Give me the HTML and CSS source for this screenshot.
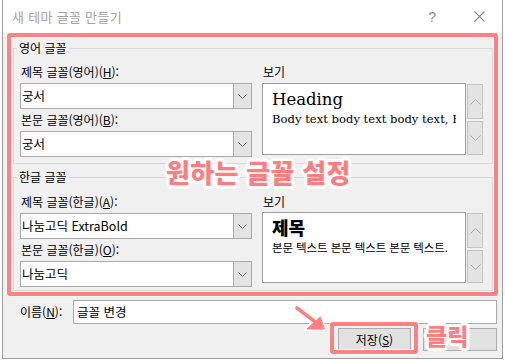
FILE: index.html
```html
<!DOCTYPE html>
<html lang="ko">
<head>
<meta charset="utf-8">
<title>새 테마 글꼴 만들기</title>
<link rel="stylesheet" href="styles.css">
</head>
<body>
<div class="window">
  <div class="titlebar">
    <span class="title">새 테마 글꼴 만들기</span>
    <span class="help">?</span>
    <span class="close"><svg width="11" height="11" viewBox="0 0 11 11"><path d="M0.5 0.5 L10.5 10.5 M10.5 0.5 L0.5 10.5" stroke="#8c8c8c" stroke-width="1.1" fill="none"/></svg></span>
  </div>

  <div class="group group-en">
    <div class="legend">영어 글꼴</div>
    <div class="grid">
      <div class="col-left">
        <div class="label">제목 글꼴(영어)(<u>H</u>):</div>
        <div class="combo"><span class="combo-text">궁서</span><span class="combo-btn"><svg width="9" height="5" viewBox="0 0 9 5"><polyline points="0.5,0.5 4.5,4.5 8.5,0.5" fill="none" stroke="#606060" stroke-width="1"/></svg></span></div>
        <div class="label gap-top">본문 글꼴(영어)(<u>B</u>):</div>
        <div class="combo"><span class="combo-text">궁서</span><span class="combo-btn"><svg width="9" height="5" viewBox="0 0 9 5"><polyline points="0.5,0.5 4.5,4.5 8.5,0.5" fill="none" stroke="#606060" stroke-width="1"/></svg></span></div>
      </div>
      <div class="col-right">
        <div class="label">보기</div>
        <div class="preview-row">
          <div class="preview preview-en">
            <div class="pv-head-en">Heading</div>
            <div class="pv-body-en">Body text body text body text, Body text</div>
          </div>
          <div class="spin">
            <div class="spin-btn spin-up"><svg width="11" height="6" viewBox="0 0 11 6"><polyline points="0.5,5.5 5.5,0.5 10.5,5.5" fill="none" stroke="#a6a6a6" stroke-width="1"/></svg></div>
            <div class="spin-btn spin-down"><svg width="11" height="6" viewBox="0 0 11 6"><polyline points="0.5,0.5 5.5,5.5 10.5,0.5" fill="none" stroke="#a6a6a6" stroke-width="1"/></svg></div>
          </div>
        </div>
      </div>
    </div>
  </div>

  <div class="group group-ko">
    <div class="legend">한글 글꼴</div>
    <div class="grid">
      <div class="col-left">
        <div class="label">제목 글꼴(한글)(<u>A</u>):</div>
        <div class="combo"><span class="combo-text">나눔고딕 ExtraBold</span><span class="combo-btn"><svg width="9" height="5" viewBox="0 0 9 5"><polyline points="0.5,0.5 4.5,4.5 8.5,0.5" fill="none" stroke="#606060" stroke-width="1"/></svg></span></div>
        <div class="label gap-top">본문 글꼴(한글)(<u>O</u>):</div>
        <div class="combo"><span class="combo-text">나눔고딕</span><span class="combo-btn"><svg width="9" height="5" viewBox="0 0 9 5"><polyline points="0.5,0.5 4.5,4.5 8.5,0.5" fill="none" stroke="#606060" stroke-width="1"/></svg></span></div>
      </div>
      <div class="col-right">
        <div class="label">보기</div>
        <div class="preview-row">
          <div class="preview preview-ko">
            <div class="pv-head-ko">제목</div>
            <div class="pv-body-ko">본문 텍스트 본문 텍스트 본문 텍스트.</div>
          </div>
          <div class="spin">
            <div class="spin-btn spin-up"><svg width="11" height="6" viewBox="0 0 11 6"><polyline points="0.5,5.5 5.5,0.5 10.5,5.5" fill="none" stroke="#a6a6a6" stroke-width="1"/></svg></div>
            <div class="spin-btn spin-down"><svg width="11" height="6" viewBox="0 0 11 6"><polyline points="0.5,0.5 5.5,5.5 10.5,0.5" fill="none" stroke="#a6a6a6" stroke-width="1"/></svg></div>
          </div>
        </div>
      </div>
    </div>
  </div>

  <div class="name-row">
    <span class="name-label">이름(<u>N</u>):</span>
    <div class="name-input">글꼴 변경</div>
  </div>

  <div class="button-row">
    <div class="btn">저장(<u>S</u>)</div>
    <div class="btn btn-cancel"></div>
  </div>
</div>

<div class="hl-main"></div>
<div class="hl-save"></div>
<div class="callout-main">원하는 글꼴 설정</div>
<div class="callout-click">클릭</div>
<svg class="arrow" width="60" height="45" viewBox="285 295 60 45">
  <g stroke="#ffffff" stroke-linecap="round" stroke-linejoin="round" fill="#ffffff">
    <line x1="297" y1="308" x2="318" y2="324" stroke-width="7"/>
    <polygon points="324,329 306,329 320,316" stroke-width="4"/>
  </g>
  <g stroke="#ff7f7f" stroke-linecap="round" stroke-linejoin="round" fill="#ff7f7f">
    <line x1="297" y1="308" x2="318" y2="324" stroke-width="3.5"/>
    <polygon points="324,329 307,329 320,317" stroke-width="1"/>
  </g>
</svg>
</body>
</html>
```

FILE: styles.css
```css
* {
  box-sizing: border-box;
}

html, body {
  margin: 0;
  padding: 0;
  background: #ffffff;
}

body {
  width: 505px;
  height: 362px;
  overflow: hidden;
  font-family: "Noto Sans CJK KR", "Noto Sans", sans-serif;
  font-size: 12px;
  color: #000;
}

u {
  text-decoration: underline;
  text-underline-offset: 1px;
}

.window {
  margin-left: 2px;
  width: 501px;
  height: 359px;
  border: 1px solid #9e9e9e;
  border-top: none;
  background: #f0f0f0;
}

.titlebar {
  height: 33px;
  background: #ffffff;
  display: flex;
  align-items: center;
  padding-left: 9px;
}

.title {
  font-size: 13px;
  color: #a2a2a2;
  line-height: 16px;
  flex: 1;
  letter-spacing: 0.3px;
}

.help {
  font-family: "Liberation Sans", sans-serif;
  font-size: 14px;
  color: #8c8c8c;
  margin-right: 38px;
  line-height: 14px;
}

.close {
  display: flex;
  margin-right: 17px;
}

.group {
  margin: 0 9px 0 10px;
  border: 1px solid #d9d9d9;
}

.group-en {
  margin-top: 15px;
  padding: 0 8px 6px 6px;
}

.group-ko {
  margin-top: 13px;
  padding: 0 8px 3px 6px;
}

.legend {
  display: table;
  margin: -9px 0 0 -3px;
  padding: 0 2px;
  background: #f0f0f0;
  line-height: 16px;
}

.grid {
  display: grid;
  grid-template-columns: 232px 221px;
  column-gap: 10px;
}

.group-en .grid {
  margin-top: 8px;
}

.group-ko .grid {
  margin-top: 9px;
}

.label {
  line-height: 16px;
  height: 16px;
  padding-left: 1px;
  white-space: nowrap;
}

.gap-top {
  margin-top: 3px;
}

.combo {
  margin-top: 3px;
  height: 26px;
  display: flex;
  border: 1px solid #a9a9a9;
  background: #ffffff;
}

.group-ko .col-left > .combo:first-of-type {
  margin-top: 2px;
}

.combo-text {
  flex: 1;
  padding-left: 1px;
  font-size: 12.5px;
  line-height: 24px;
  white-space: nowrap;
}

.combo-btn {
  width: 18px;
  background: #e3e3e3;
  border-left: 1px solid #a9a9a9;
  display: flex;
  align-items: center;
  justify-content: center;
  padding-top: 1px;
}

.preview-row {
  display: flex;
  margin-top: 3px;
}

.group-ko .preview-row {
  margin-top: 2px;
}

.preview {
  width: 204px;
  border: 1px solid #a0a0a0;
  background: #ffffff;
  padding-left: 9px;
  padding-right: 9px;
}

.preview-en {
  height: 72px;
  padding-top: 6px;
}

.preview-ko {
  height: 71px;
  padding-top: 3px;
}

.pv-head-en {
  font-family: "DejaVu Serif", serif;
  font-size: 16.5px;
  line-height: 20px;
  white-space: nowrap;
}

.pv-body-en {
  margin-top: 2px;
  font-family: "DejaVu Serif", serif;
  font-size: 11.6px;
  line-height: 14px;
  white-space: nowrap;
  overflow: hidden;
}

.pv-head-ko {
  font-size: 18px;
  font-weight: 900;
  line-height: 22px;
  white-space: nowrap;
}

.pv-body-ko {
  margin-top: 2px;
  font-size: 11.5px;
  line-height: 14px;
  white-space: nowrap;
  overflow: hidden;
  letter-spacing: -0.1px;
}

.spin {
  margin-left: 1px;
  width: 16px;
  display: flex;
  flex-direction: column;
  gap: 2px;
  padding-top: 1px;
}

.spin-btn {
  background: #e3e3e3;
  border: 1px solid #c4c4c4;
  display: flex;
  align-items: center;
  justify-content: center;
}

.group-en .spin-up { height: 35px; }
.group-en .spin-down { height: 34px; }
.group-ko .spin-up { height: 35px; }
.group-ko .spin-down { height: 33px; }

.name-row {
  margin-top: 9px;
  padding-left: 17px;
  margin-right: 5px;
  display: flex;
  align-items: center;
}

.name-label {
  width: 53px;
  line-height: 16px;
}

.name-input {
  flex: 1;
  height: 24px;
  border: 1px solid #a9a9a9;
  background: #ffffff;
  padding-left: 3px;
  font-size: 12.5px;
  line-height: 22px;
}

.button-row {
  margin-top: 4px;
  margin-right: 5px;
  display: flex;
  justify-content: flex-end;
  gap: 12px;
}

.btn {
  width: 73px;
  height: 23px;
  background: #e1e1e1;
  border: 1px solid #adadad;
  text-align: center;
  line-height: 21px;
}

.btn-cancel {
  width: 74px;
}

/* annotations drawn over the dialog */
.hl-main {
  position: absolute;
  left: 7px;
  top: 33px;
  width: 491px;
  height: 263px;
  border: 4px solid #ff8080;
  border-radius: 3px;
  box-shadow: 0 0 0 1px rgba(255, 255, 255, 0.8), inset 0 0 0 1px rgba(255, 255, 255, 0.8);
}

.hl-save {
  position: absolute;
  left: 330px;
  top: 322px;
  width: 88px;
  height: 32px;
  border: 4px solid #ff8080;
  border-radius: 3px;
  box-shadow: 0 0 0 1px rgba(255, 255, 255, 0.8), inset 0 0 0 1px rgba(255, 255, 255, 0.8);
}

.callout-main,
.callout-click {
  position: absolute;
  font-weight: 900;
  color: #ff7f7f;
  white-space: nowrap;
  text-shadow:
    3px 0 0 #fff, -3px 0 0 #fff, 0 3px 0 #fff, 0 -3px 0 #fff,
    2px 2px 0 #fff, -2px 2px 0 #fff, 2px -2px 0 #fff, -2px -2px 0 #fff,
    3px 1px 0 #fff, -3px 1px 0 #fff, 3px -1px 0 #fff, -3px -1px 0 #fff,
    1px 3px 0 #fff, -1px 3px 0 #fff, 1px -3px 0 #fff, -1px -3px 0 #fff;
}

.callout-main {
  left: 166px;
  top: 159px;
  font-size: 26px;
  line-height: 26px;
  letter-spacing: 0.3px;
}

.callout-click {
  left: 426px;
  top: 324px;
  font-size: 23px;
  line-height: 23px;
}

.arrow {
  position: absolute;
  left: 285px;
  top: 295px;
}
```
